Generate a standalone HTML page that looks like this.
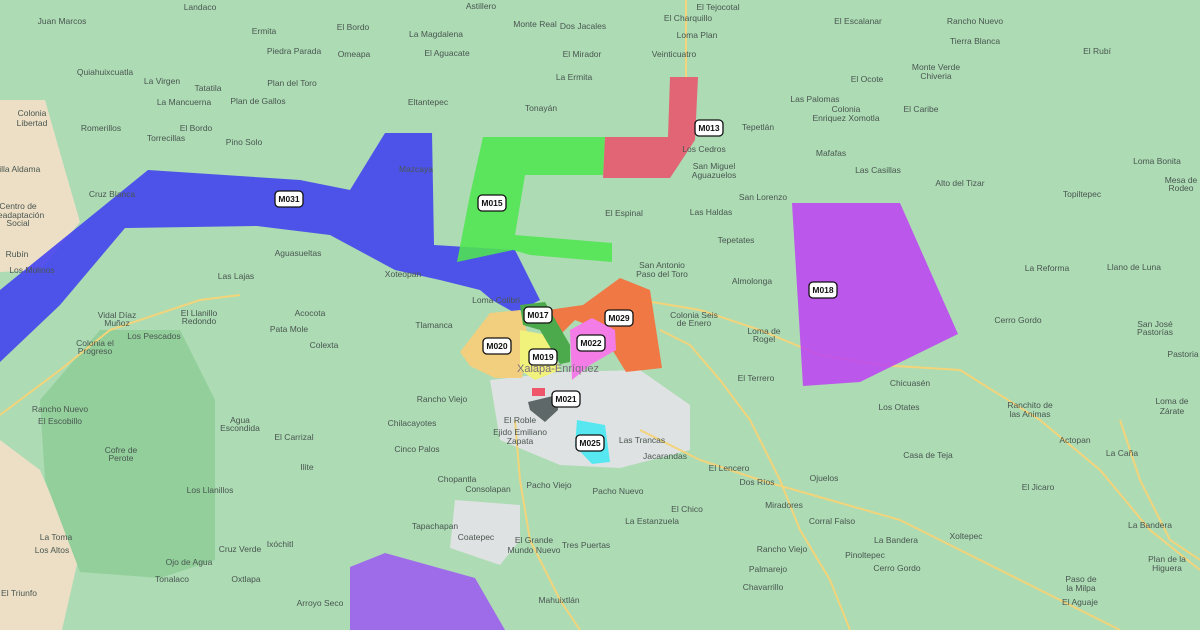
<!DOCTYPE html>
<html><head><meta charset="utf-8"><style>
html,body{margin:0;padding:0;width:1200px;height:630px;overflow:hidden;background:#acdbb4}
svg{position:absolute;left:0;top:0}
text{font-family:"Liberation Sans",sans-serif;font-size:8.5px;fill:#4a5650;text-anchor:middle}
.m rect{fill:#fff;stroke:#111;stroke-width:1.3}
.m text{font-weight:bold;fill:#111;font-size:8.5px}
</style></head><body>
<svg width="1200" height="630" viewBox="0 0 1200 630">
<polygon points="0,100 45,100 65,170 80,222 40,270 0,272" fill="#ecdfc6"/>
<polygon points="0,440 40,470 78,560 62,630 0,630" fill="#ecdfc6"/>
<polygon points="40,400 100,330 180,330 215,400 215,560 160,578 80,572 45,480" fill="#92cf9b"/>
<polygon points="490,380 560,372 640,370 690,405 690,450 620,468 560,465 500,440" fill="#dfe2e2"/>
<polygon points="455,500 520,505 520,540 500,565 450,548" fill="#dfe2e2"/>
<g fill="none" stroke="#f3d47a" stroke-width="2">
<polyline points="0,415 60,370 110,330 200,300 240,295"/>
<polyline points="640,300 700,310 760,330 820,355 880,365 960,370 1040,420 1100,470 1150,530 1200,570"/>
<polyline points="660,330 690,345 720,380 750,420 780,480 800,530 830,580 850,630"/>
<polyline points="515,420 520,480 530,540 560,600 580,630"/>
<polyline points="640,430 700,460 760,480 830,500 900,520 980,560 1060,600 1120,630"/>
<polyline points="686,0 686,77"/>
<polyline points="1120,420 1140,480 1170,540 1200,560"/>
</g>
<polygon points="0,290 148,170 300,180 350,190 385,133 432,133 434,245 515,250 540,300 515,313 492,300 480,290 440,280 395,270 330,235 257,226 125,228 60,305 0,362" fill="#4040f0" fill-opacity=".88"/>
<polygon points="483,137 605,137 603,175 525,175 515,235 612,243 612,262 530,255 513,250 457,262 470,195" fill="#50e650" fill-opacity=".88"/>
<polygon points="670,77 698,77 695,140 670,178 603,178 605,137 668,137" fill="#ea5068" fill-opacity=".85"/>
<polygon points="792,203 900,203 958,334 860,382 803,386" fill="#bd44f2" fill-opacity=".88"/>
<polygon points="350,567 385,553 475,578 505,630 350,630" fill="#9c5cf0" fill-opacity=".88"/>
<polygon points="460,352 490,313 520,310 530,340 522,378 495,378 470,366" fill="#f5cf7c" fill-opacity=".95"/>
<polygon points="548,310 583,305 620,278 650,290 662,368 626,372 600,330 575,320 555,340" fill="#f2733e" fill-opacity=".95"/>
<polygon points="520,330 548,335 560,370 535,380 520,370" fill="#f0f27c"/>
<polygon points="520,305 545,302 570,345 570,362 560,364 540,330 523,325" fill="#4caa4c"/>
<polygon points="570,330 592,318 615,330 616,350 590,365 572,380" fill="#f47ce6"/>
<polygon points="528,402 557,395 558,410 545,422 530,410" fill="#5e6868"/>
<polygon points="532,388 545,388 545,396 532,396" fill="#f0566a"/>
<polygon points="577,420 605,425 610,462 592,464 575,446" fill="#3ee8f2" fill-opacity=".85"/>
<g>
<text x="62" y="24">Juan Marcos</text><text x="200" y="10">Landaco</text><text x="353" y="30">El Bordo</text><text x="481" y="9">Astillero</text>
<text x="535" y="27">Monte Real</text><text x="583" y="29">Dos Jacales</text><text x="718" y="10">El Tejocotal</text><text x="688" y="21">El Charquillo</text><text x="697" y="38">Loma Plan</text>
<text x="858" y="24">El Escalanar</text><text x="975" y="24">Rancho Nuevo</text><text x="975" y="44">Tierra Blanca</text><text x="1097" y="54">El Rubí</text>
<text x="264" y="34">Ermita</text><text x="294" y="54">Piedra Parada</text><text x="354" y="57">Omeapa</text><text x="436" y="37">La Magdalena</text><text x="447" y="56">El Aguacate</text>
<text x="582" y="57">El Mirador</text><text x="674" y="57">Veinticuatro</text><text x="105" y="75">Quiahuixcuatla</text><text x="162" y="84">La Virgen</text><text x="208" y="91">Tatatila</text>
<text x="184" y="105">La Mancuerna</text><text x="258" y="104">Plan de Gallos</text><text x="292" y="86">Plan del Toro</text><text x="428" y="105">Eltantepec</text><text x="541" y="111">Tonayán</text>
<text x="574" y="80">La Ermita</text><text x="867" y="82">El Ocote</text><text x="936" y="70">Monte Verde</text><text x="936" y="79">Chiveria</text><text x="815" y="102">Las Palomas</text>
<text x="846" y="112">Colonia</text><text x="846" y="121">Enriquez Xomotla</text><text x="921" y="112">El Caribe</text><text x="32" y="116">Colonia</text><text x="32" y="126">Libertad</text>
<text x="101" y="131">Romerillos</text><text x="196" y="131">El Bordo</text><text x="166" y="141">Torrecillas</text><text x="758" y="130">Tepetlán</text><text x="704" y="152">Los Cedros</text>
<text x="714" y="169">San Miguel</text><text x="714" y="178">Aguazuelos</text><text x="831" y="156">Mafafas</text><text x="878" y="173">Las Casillas</text><text x="960" y="186">Alto del Tizar</text>
<text x="1157" y="164">Loma Bonita</text><text x="1181" y="183">Mesa de</text><text x="1181" y="191">Rodeo</text><text x="1082" y="197">Topiltepec</text><text x="17" y="172">Villa Aldama</text>
<text x="244" y="145">Pino Solo</text><text x="112" y="197">Cruz Blanca</text><text x="416" y="172">Mazcaya</text><text x="18" y="209">Centro de</text><text x="18" y="218">Readaptación</text><text x="18" y="226">Social</text>
<text x="624" y="216">El Espinal</text><text x="711" y="215">Las Haldas</text><text x="763" y="200">San Lorenzo</text><text x="736" y="243">Tepetates</text><text x="17" y="257">Rubín</text>
<text x="298" y="256">Aguasueltas</text><text x="236" y="279">Las Lajas</text><text x="32" y="273">Los Molinos</text><text x="1047" y="271">La Reforma</text><text x="1134" y="270">Llano de Luna</text>
<text x="662" y="268">San Antonio</text><text x="662" y="277">Paso del Toro</text><text x="752" y="284">Almolonga</text><text x="403" y="277">Xoteopan</text><text x="496" y="303">Loma Colibri</text>
<text x="310" y="316">Acocota</text><text x="289" y="332">Pata Mole</text><text x="199" y="316">El Llanillo</text><text x="199" y="324">Redondo</text><text x="117" y="318">Vidal Díaz</text><text x="117" y="326">Muñoz</text>
<text x="434" y="328">Tlamanca</text><text x="694" y="318">Colonia Seis</text><text x="694" y="326">de Enero</text><text x="764" y="334">Loma de</text><text x="764" y="342">Rogel</text><text x="1018" y="323">Cerro Gordo</text>
<text x="1155" y="327">San José</text><text x="1155" y="335">Pastorías</text><text x="1183" y="357">Pastoria</text><text x="95" y="346">Colonia el</text><text x="95" y="354">Progreso</text><text x="154" y="339">Los Pescados</text>
<text x="324" y="348">Colexta</text><text x="558" y="372" style="font-size:11px;fill:#7a6a80">Xalapa-Enríquez</text><text x="756" y="381">El Terrero</text><text x="910" y="386">Chicuasén</text>
<text x="442" y="402">Rancho Viejo</text><text x="60" y="412">Rancho Nuevo</text><text x="60" y="424">El Escobillo</text><text x="899" y="410">Los Otates</text><text x="1030" y="408">Ranchito de</text><text x="1030" y="417">las Animas</text>
<text x="1172" y="404">Loma de</text><text x="1172" y="414">Zárate</text><text x="520" y="423">El Roble</text><text x="240" y="423">Agua</text><text x="240" y="431">Escondida</text><text x="412" y="426">Chilacayotes</text><text x="520" y="435">Ejido Emiliano</text><text x="520" y="444">Zapata</text>
<text x="294" y="440">El Carrizal</text><text x="642" y="443">Las Trancas</text><text x="1075" y="443">Actopan</text><text x="1122" y="456">La Caña</text><text x="417" y="452">Cinco Palos</text><text x="121" y="453">Cofre de</text><text x="121" y="461">Perote</text>
<text x="665" y="459">Jacarandas</text><text x="928" y="458">Casa de Teja</text><text x="307" y="470">Ilite</text><text x="729" y="471">El Lencero</text><text x="457" y="482">Chopantla</text><text x="824" y="481">Ojuelos</text>
<text x="757" y="485">Dos Ríos</text><text x="488" y="492">Consolapan</text><text x="549" y="488">Pacho Viejo</text><text x="618" y="494">Pacho Nuevo</text><text x="210" y="493">Los Llanillos</text><text x="1038" y="490">El Jicaro</text>
<text x="784" y="508">Miradores</text><text x="687" y="512">El Chico</text><text x="652" y="524">La Estanzuela</text><text x="832" y="524">Corral Falso</text><text x="1150" y="528">La Bandera</text><text x="435" y="529">Tapachapan</text>
<text x="476" y="540">Coatepec</text><text x="896" y="543">La Bandera</text><text x="966" y="539">Xoltepec</text><text x="56" y="540">La Toma</text><text x="52" y="553">Los Altos</text><text x="280" y="547">Ixóchitl</text><text x="240" y="552">Cruz Verde</text>
<text x="586" y="548">Tres Puertas</text><text x="534" y="543">El Grande</text><text x="534" y="553">Mundo Nuevo</text><text x="782" y="552">Rancho Viejo</text><text x="865" y="558">Pinoltepec</text><text x="1167" y="562">Plan de la</text><text x="1167" y="571">Higuera</text>
<text x="189" y="565">Ojo de Agua</text><text x="172" y="582">Tonalaco</text><text x="246" y="582">Oxtlapa</text><text x="768" y="572">Palmarejo</text><text x="897" y="571">Cerro Gordo</text><text x="1081" y="582">Paso de</text><text x="1081" y="591">la Milpa</text>
<text x="19" y="596">El Triunfo</text><text x="763" y="590">Chavarrillo</text><text x="559" y="603">Mahuixtlán</text><text x="320" y="606">Arroyo Seco</text><text x="1080" y="605">El Aguaje</text>
</g>
<g class="m">
<g transform="translate(289,199)"><rect x="-14" y="-8" width="28" height="16" rx="4"/><text y="3">M031</text></g>
<g transform="translate(492,203)"><rect x="-14" y="-8" width="28" height="16" rx="4"/><text y="3">M015</text></g>
<g transform="translate(709,128)"><rect x="-14" y="-8" width="28" height="16" rx="4"/><text y="3">M013</text></g>
<g transform="translate(823,290)"><rect x="-14" y="-8" width="28" height="16" rx="4"/><text y="3">M018</text></g>
<g transform="translate(538,315)"><rect x="-14" y="-8" width="28" height="16" rx="4"/><text y="3">M017</text></g>
<g transform="translate(619,318)"><rect x="-14" y="-8" width="28" height="16" rx="4"/><text y="3">M029</text></g>
<g transform="translate(497,346)"><rect x="-14" y="-8" width="28" height="16" rx="4"/><text y="3">M020</text></g>
<g transform="translate(591,343)"><rect x="-14" y="-8" width="28" height="16" rx="4"/><text y="3">M022</text></g>
<g transform="translate(543,357)"><rect x="-14" y="-8" width="28" height="16" rx="4"/><text y="3">M019</text></g>
<g transform="translate(566,399)"><rect x="-14" y="-8" width="28" height="16" rx="4"/><text y="3">M021</text></g>
<g transform="translate(590,443)"><rect x="-14" y="-8" width="28" height="16" rx="4"/><text y="3">M025</text></g>
</g>
</svg>
</body></html>
